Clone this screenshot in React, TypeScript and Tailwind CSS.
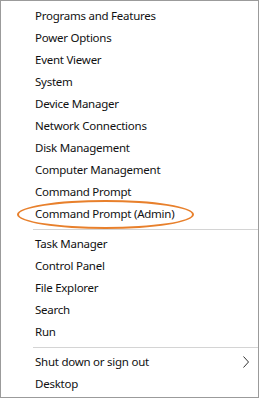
const groups: string[][] = [
  [
    "Programs and Features",
    "Power Options",
    "Event Viewer",
    "System",
    "Device Manager",
    "Network Connections",
    "Disk Management",
    "Computer Management",
    "Command Prompt",
    "Command Prompt (Admin)",
  ],
  ["Task Manager", "Control Panel", "File Explorer", "Search", "Run"],
  ["Shut down or sign out", "Desktop"],
]

const MenuRow = ({ label }: { label: string }) => {
  const highlighted = label === "Command Prompt (Admin)"
  const hasSubmenu = label === "Shut down or sign out"

  return (
    <div className="relative flex h-[22px] items-center justify-between pl-[34px] pr-[9px]">
      <span>{label}</span>
      {hasSubmenu ? (
        <svg width="6" height="12" viewBox="0 0 6 12" className="text-[#333]">
          <path d="M0.5 0.5 L5.5 6 L0.5 11.5" fill="none" stroke="currentColor" strokeWidth="1" />
        </svg>
      ) : null}
      {highlighted ? (
        <span className="pointer-events-none absolute left-[16px] top-[-3px] h-[29px] w-[177px] rounded-[50%] border-2 border-[#e8802c]" />
      ) : null}
    </div>
  )
}

export default function App() {
  return (
    <div className="h-[399px] w-[260px] bg-white">
      <div
        className="h-[398px] w-[259px] border border-[#9b9b9b] bg-white pt-[4px] text-[11.5px] tracking-[-0.25px] text-[#111]"
        style={{ fontFamily: '"Noto Sans", "Open Sans", sans-serif' }}
      >
        {groups.map((items, index) => (
          <div key={index}>
            {index > 0 ? <div className="mb-[3px] ml-[32px] mt-[4px] h-px bg-[#d4d4d4]" /> : null}
            {items.map((label) => (
              <MenuRow key={label} label={label} />
            ))}
          </div>
        ))}
      </div>
    </div>
  )
}
